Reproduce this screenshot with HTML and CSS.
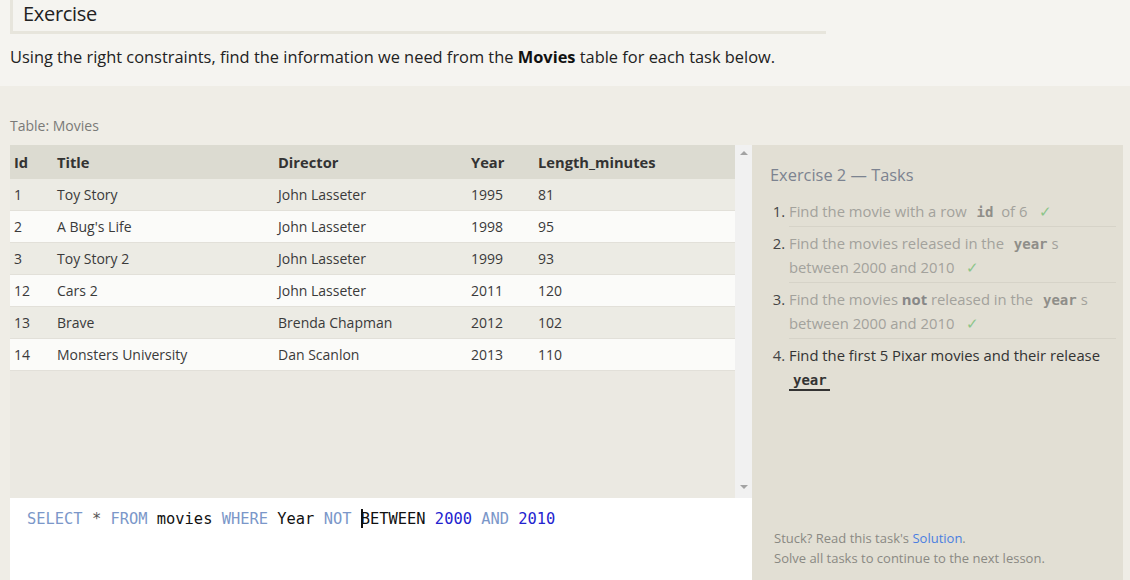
FILE: index.html
```html
<!DOCTYPE html>
<html>
<head>
<meta charset="utf-8">
<link rel="stylesheet" href="styles.css">
</head>
<body>
<div class="top">
  <div class="ex-head">Exercise</div>
  <p class="intro">Using the right constraints, find the information we need from the <b>Movies</b> table for each task below.</p>
</div>
<div class="lesson">
  <div class="table-label">Table: Movies</div>
  <div class="workspace">
    <div class="left">
      <div class="results">
        <div class="table-area">
          <table class="movies">
            <thead>
              <tr><th class="c-id">Id</th><th class="c-title">Title</th><th class="c-dir">Director</th><th class="c-year">Year</th><th>Length_minutes</th></tr>
            </thead>
            <tbody>
              <tr><td>1</td><td>Toy Story</td><td>John Lasseter</td><td>1995</td><td>81</td></tr>
              <tr><td>2</td><td>A Bug's Life</td><td>John Lasseter</td><td>1998</td><td>95</td></tr>
              <tr><td>3</td><td>Toy Story 2</td><td>John Lasseter</td><td>1999</td><td>93</td></tr>
              <tr><td>12</td><td>Cars 2</td><td>John Lasseter</td><td>2011</td><td>120</td></tr>
              <tr><td>13</td><td>Brave</td><td>Brenda Chapman</td><td>2012</td><td>102</td></tr>
              <tr><td>14</td><td>Monsters University</td><td>Dan Scanlon</td><td>2013</td><td>110</td></tr>
            </tbody>
          </table>
        </div>
        <div class="scrollbar">
          <span class="arrow up"></span>
          <span class="arrow down"></span>
        </div>
      </div>
      <div class="editor"><span class="kw">SELECT</span> <span class="op">*</span> <span class="kw">FROM</span> movies <span class="kw">WHERE</span> Year <span class="kw">NOT</span> <span class="cursor"></span>BETWEEN <span class="num">2000</span> <span class="kw">AND</span> <span class="num">2010</span></div>
    </div>
    <div class="tasks">
      <div class="tasks-title">Exercise 2 — Tasks</div>
      <ol class="task-list">
        <li class="done">Find the movie with a row <code>id</code> of 6 <span class="check">✓</span></li>
        <li class="done">Find the movies released in the <code>year</code>s between 2000 and 2010 <span class="check">✓</span></li>
        <li class="done">Find the movies <b>not</b> released in the <code>year</code>s between 2000 and 2010 <span class="check">✓</span></li>
        <li class="current">Find the first 5 Pixar movies and their release <code class="u">year</code></li>
      </ol>
      <div class="help">
        <div>Stuck? Read this task's <a class="sol">Solution</a>.</div>
        <div>Solve all tasks to continue to the next lesson.</div>
      </div>
    </div>
  </div>
</div>
</body>
</html>
```

FILE: styles.css
```css
html, body {
  margin: 0;
  padding: 0;
}
body {
  background: #efede6;
  font-family: "Open Sans", "Noto Sans", sans-serif;
  color: #333;
  width: 1130px;
  height: 580px;
  overflow: hidden;
}
.top {
  background: #f5f4f0;
  height: 86px;
  padding-left: 10px;
}
.ex-head {
  width: 803px;
  height: 31px;
  border-left: 3px solid #e7e5dc;
  border-bottom: 3px solid #e7e5dc;
  padding-left: 10px;
  font-size: 20px;
  line-height: 27px;
  color: #222;
  letter-spacing: -0.3px;
}
.intro {
  margin: 12px 0 0;
  font-size: 16.4px;
  line-height: 22px;
  color: #222;
}
.intro b {
  color: #111;
}
.lesson {
  padding-left: 10px;
}
.table-label {
  padding-top: 30px;
  height: 29px;
  font-size: 14px;
  line-height: 20px;
  color: #7a7a78;
}
.workspace {
  display: grid;
  grid-template-columns: 742px 371px;
  height: 435px;
}
.left {
  display: flex;
  flex-direction: column;
}
.results {
  display: flex;
  height: 353px;
}
.table-area {
  width: 725px;
  background: #ebe9e2;
}
.movies {
  width: 100%;
  border-collapse: collapse;
  font-size: 14px;
}
.movies th {
  background: #dcdbd1;
  height: 34px;
  text-align: left;
  font-weight: 700;
  color: #333;
  padding: 0 0 0 4px;
  font-size: 14.7px;
}
.movies td {
  height: 31px;
  padding: 0 0 0 4px;
  color: #3a3a3a;
  border-bottom: 1px solid #e2e0d9;
}
.movies tbody tr:nth-child(odd) td {
  background: #ecebe4;
}
.movies tbody tr:nth-child(even) td {
  background: #fbfbf9;
}
.c-id { width: 39px; }
.c-title { width: 217px; }
.c-dir { width: 189px; }
.c-year { width: 63px; }
.scrollbar {
  width: 17px;
  background: #f1f1f1;
  display: flex;
  flex-direction: column;
  justify-content: space-between;
  align-items: center;
  padding: 6px 0;
}
.arrow {
  width: 0;
  height: 0;
  border-left: 4px solid transparent;
  border-right: 4px solid transparent;
}
.arrow.up {
  border-bottom: 4px solid #a3a3a3;
}
.arrow.down {
  border-top: 4px solid #a3a3a3;
  margin-bottom: 3px;
}
.editor {
  flex: 1;
  background: #fff;
  padding: 11px 0 0 17px;
  font-family: "DejaVu Sans Mono", monospace;
  font-size: 15.4px;
  line-height: 20px;
  color: #111;
  white-space: pre;
}
.editor .kw { color: #7b97c9; }
.editor .op { color: #555; }
.editor .num { color: #2323cf; }
.cursor {
  display: inline-block;
  width: 2px;
  height: 19px;
  background: #111;
  vertical-align: -4px;
  margin-right: -2px;
}
.tasks {
  background: #e2dfd4;
  display: flex;
  flex-direction: column;
  padding: 18px 7px 12px 18px;
}
.tasks-title {
  font-size: 16.4px;
  line-height: 24px;
  color: #7c8390;
}
.task-list {
  margin: 8px 0 0;
  padding: 0 0 0 19px;
  font-size: 14.8px;
  line-height: 24px;
}
.task-list li {
  padding: 4px 14px 3px 0;
  border-bottom: 1px solid #d6d3c8;
}
.task-list li::marker {
  color: #444;
}
.task-list li.done {
  color: #a3a29c;
}
.task-list li.current {
  color: #333;
  border-bottom: none;
}
.task-list b {
  color: #888;
}
.task-list code {
  font-family: "DejaVu Sans Mono", monospace;
  font-weight: 700;
  font-size: 14px;
  line-height: 14px;
  color: #8f8e89;
  padding: 0 4px 0 6px;
}
.task-list code.u {
  color: #333;
  display: inline-block;
  border-bottom: 2px solid #333;
  line-height: 18px;
  padding: 0 3px 0 4px;
}
.check {
  color: #8cc58a;
  margin-left: 8px;
}
.help {
  margin-top: auto;
  padding-left: 4px;
  font-size: 13px;
  line-height: 20px;
  color: #8a8983;
}
.sol {
  color: #4a7ee0;
}
```
